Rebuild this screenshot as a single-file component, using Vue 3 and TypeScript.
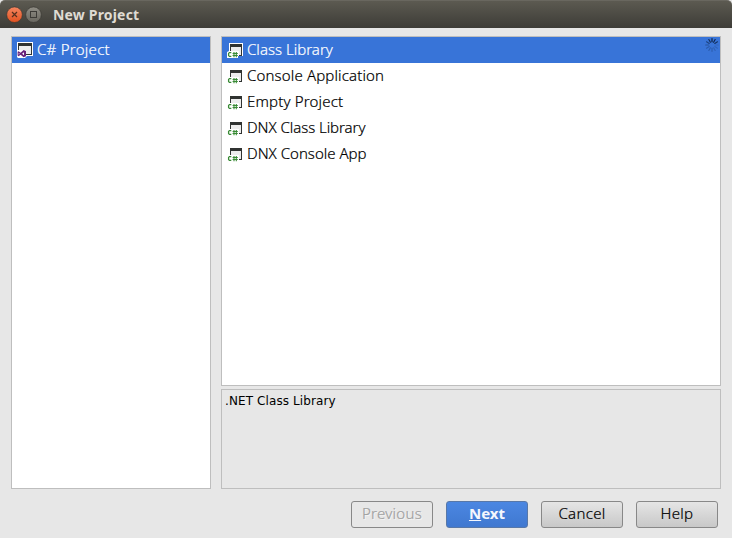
<script setup lang="ts">
import { ref } from 'vue'

interface Template {
  name: string
  tracking: number
}

const templates: Template[] = [
  { name: 'Class Library', tracking: 0.02 },
  { name: 'Console Application', tracking: 0.15 },
  { name: 'Empty Project', tracking: 0.17 },
  { name: 'DNX Class Library', tracking: -0.06 },
  { name: 'DNX Console App', tracking: 0 },
]
const selected = ref(0)
const spokes = Array.from({ length: 12 }, (_, i) => ({
  angle: i * 30,
  opacity: [1, 0.95, 0.8, 0.15, 0.18, 0.22, 0.26, 0.28, 0.3, 0.4, 0.6, 0.85][i],
}))
</script>

<template>
  <div class="window">
    <header class="titlebar">
      <svg class="controls" width="36" height="18" viewBox="0 0 36 18">
        <defs>
          <linearGradient id="closeFill" x1="0" y1="0" x2="0" y2="1">
            <stop offset="0" stop-color="#f58660" />
            <stop offset="1" stop-color="#e25220" />
          </linearGradient>
          <linearGradient id="maxFill" x1="0" y1="0" x2="0" y2="1">
            <stop offset="0" stop-color="#908e85" />
            <stop offset="1" stop-color="#68665f" />
          </linearGradient>
        </defs>
        <circle cx="8.5" cy="8.7" r="7.8" fill="url(#closeFill)" stroke="#34322d" stroke-width=".6" />
        <path d="M6 6l5 5m0-5l-5 5" stroke="#55301f" stroke-width="1.2" />
        <circle cx="27.5" cy="8.7" r="7.8" fill="url(#maxFill)" stroke="#34322d" stroke-width=".6" />
        <rect x="24.5" y="5.5" width="6" height="6" fill="none" stroke="#3c3b37" />
      </svg>
      <h1>New Project</h1>
    </header>

    <main class="content">
      <section class="panel">
        <div class="row category selected">
          <svg width="17" height="16" viewBox="0 0 17 16">
            <path d="M1 0h16v14h-6l-2 2H2l-1-1z" fill="#fff" />
            <path d="M2 1h14v12h-6v-1h5V4H3v4H2z" fill="#303331" />
            <path d="M3 4h12v8h-5V8H3z" fill="#ededed" />
            <path d="M7.6 8l2.4 1v5.3l-2.4 1-3-2.6-2 1.5-1-.6V9.8l1-.6 2 1.5z" fill="#68217a" />
            <path d="M2.7 10.8v1.9l1-.95zM8 10.2v3l-1.9-1.5z" fill="#fff" />
          </svg>
          <span>C# Project</span>
        </div>
      </section>

      <div class="side">
        <section class="panel templates">
          <div
            v-for="(t, i) in templates"
            :key="t.name"
            class="row"
            :class="{ selected: i === selected }"
            @click="selected = i"
          >
            <svg width="17" height="16" viewBox="0 0 17 16">
              <path v-if="i === selected" d="M2 1h14v13h-5v2H0v-6l2-1z" fill="#fff" />
              <path d="M3 2h12v12h-3v-1h2V5H4v4H3z" fill="#303331" />
              <path d="M4 5h10v8h-2V9H4z" fill="#ededed" />
              <path d="M4.3 10.6H2.4l-.8.8v2.2l.8.8h1.9" fill="none" stroke="#388a34" stroke-width="1.3" />
              <path d="M7 10v5.2M9.3 10v5.2M5.6 11.5h5.2M5.6 13.5h5.2" fill="none" stroke="#388a34" stroke-width="1.1" />
            </svg>
            <span :style="{ letterSpacing: t.tracking + 'px' }">{{ t.name }}</span>
          </div>
          <svg class="spinner" width="16" height="16" viewBox="-8 -8 16 16">
            <path
              v-for="s in spokes"
              :key="s.angle"
              d="M0 -3.2V-6.3"
              :transform="`rotate(${s.angle})`"
              :stroke-opacity="s.opacity"
              stroke="#0c2347"
              stroke-width="1.2"
              stroke-linecap="round"
            />
          </svg>
        </section>
        <section class="description">.NET Class Library</section>
      </div>
    </main>

    <footer class="actions">
      <button class="previous" disabled>Previous</button>
      <button class="next"><span><u>N</u>ext</span></button>
      <button class="cancel">Cancel</button>
      <button class="help">Help</button>
    </footer>
  </div>
</template>

<style>
body {
  margin: 0;
  background: #e7e7e7;
}
</style>

<style scoped>
.window {
  width: 732px;
  height: 538px;
  display: flex;
  flex-direction: column;
  background: #e7e7e7;
  font: 300 15px "Noto Sans", sans-serif;
  overflow: hidden;
}
.titlebar {
  height: 28px;
  box-sizing: border-box;
  padding-left: 6px;
  display: flex;
  align-items: center;
  gap: 11px;
  color: #dfdbd2;
  background: linear-gradient(#5c5a51, #3d3c37);
  border-top: 1px solid #69675f;
  border-radius: 5px 5px 0 0;
}
.titlebar h1 {
  margin: 0;
  font-size: 14px;
  line-height: 20px;
  font-weight: 700;
  letter-spacing: 0.18px;
}
.content {
  height: 453px;
  display: grid;
  grid-template-columns: 200px 500px;
  gap: 10px;
  padding: 8px 11px 0;
}
.panel,
.description {
  box-sizing: border-box;
  border: 1px solid #bebebe;
  background: #fff;
}
.side {
  display: grid;
  grid-template-rows: 350px 100px;
  gap: 3px;
}
.templates {
  position: relative;
}
.row {
  height: 26px;
  display: flex;
  align-items: center;
  padding-left: 5px;
  gap: 3px;
  color: #000;
  white-space: nowrap;
  line-height: 22px;
  -webkit-text-stroke: 0.2px;
}
.row span {
  padding-bottom: 3px;
}
.category {
  padding-left: 4px;
  gap: 4px;
}
.category span {
  letter-spacing: 0.27px;
}
.selected {
  background: #3874d8;
  color: #fff;
}
.spinner {
  position: absolute;
  top: 0;
  right: 0;
}
.description {
  padding: 3px;
  background: #e7e7e7;
  color: #000;
  font: 12px/16px "DejaVu Sans", sans-serif;
  letter-spacing: 0.1px;
}
.actions {
  display: flex;
  gap: 13px;
  justify-content: flex-end;
  padding: 12px 14px 0 0;
}
button {
  box-sizing: border-box;
  width: 82px;
  height: 27px;
  padding: 0 0 2px;
  border: 1px solid #888;
  border-radius: 3px;
  background: linear-gradient(#e5e5e5, #c8c8c8);
  color: #000;
  font: 300 15px/23px "Noto Sans", sans-serif;
  letter-spacing: 0.3px;
  -webkit-text-stroke: 0.2px;
}
.previous {
  background: #e7e7e7;
  color: #a0a0a0;
  text-shadow: 1px 1px #f5f5f5;
}
.next {
  background: linear-gradient(#4b87e2, #4078d0);
  border-color: #5878a8;
  color: #f4f7fd;
  font-weight: 700;
  letter-spacing: 0;
  -webkit-text-stroke: 0;
}
</style>
